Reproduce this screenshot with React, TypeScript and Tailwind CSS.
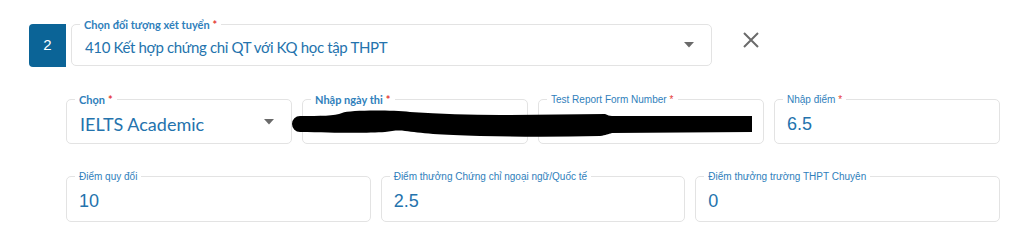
import React from 'react';

const muli = "font-['Lato','Open_Sans',sans-serif]";
const arial = "font-['Liberation_Sans',Arial,sans-serif]";

interface FieldProps {
  label: string;
  value?: string;
  required?: boolean;
  select?: boolean;
  labelFont?: string;
  valueFont?: string;
  className?: string;
}

const Caret = () => (
  <svg width="10" height="6" viewBox="0 0 10 6" className="ml-auto mr-[17px] shrink-0">
    <path d="M0 0 L10 0 L5 5.5 Z" fill="#6a6a6a" />
  </svg>
);

const Field: React.FC<FieldProps> = ({
  label,
  value,
  required,
  select,
  labelFont = `${arial} text-[10px]`,
  valueFont = `${arial} text-[18px] pl-[12px]`,
  className = '',
}) => {
  return (
    <div className={`relative flex items-center rounded-[5px] border border-[#e3e3e3] bg-white ${className}`}>
      <span className={`absolute -top-[7px] left-[8px] bg-white px-[4px] leading-[13px] text-[#2f80bb] whitespace-nowrap ${labelFont}`}>
        {label}
        {required && <span className="ml-[3px] text-[#e53935]">*</span>}
      </span>
      <span className={`pt-[4px] leading-none text-[#2473ad] whitespace-nowrap ${valueFont}`}>{value}</span>
      {select && <Caret />}
    </div>
  );
};

const muliLabel = `${muli} text-[11px] font-bold`;

export default function App() {
  return (
    <div className="relative h-[246px] w-[1024px] overflow-hidden bg-white pt-[24px]">
      <div className="flex items-start">
        <div className={`ml-[29px] flex h-[43px] w-[37px] items-center justify-center rounded-l-[4px] bg-[#0b6497] text-[15px] text-white ${arial}`}>
          2
        </div>
        <Field
          className="ml-[5px] h-[42px] w-[641px]"
          label="Chọn đối tượng xét tuyển"
          required
          select
          labelFont={muliLabel}
          valueFont={`${muli} text-[15px] tracking-[-0.35px] pl-[13px]`}
          value="410 Kết hợp chứng chỉ QT với KQ học tập THPT"
        />
        <svg width="18" height="18" viewBox="0 0 18 18" className="ml-[30px] mt-[7px]">
          <path d="M2 2 L16 16 M16 2 L2 16" stroke="#6b6b6b" strokeWidth="2" />
        </svg>
      </div>

      <div className="mt-[32px] grid grid-cols-4 gap-x-[10px] pl-[66px] pr-[24px]">
        <Field className="h-[45px]" label="Chọn" required select labelFont={muliLabel} valueFont={`${muli} text-[18px] pl-[13px]`} value="IELTS Academic" />
        <Field className="h-[45px]" label="Nhập ngày thi" required labelFont={muliLabel} />
        <Field className="h-[45px]" label="Test Report Form Number" required />
        <Field className="h-[45px]" label="Nhập điểm" required value="6.5" />
      </div>

      <div className="mt-[32px] grid grid-cols-3 gap-x-[10px] pl-[66px] pr-[24px]">
        <Field className="h-[46px]" label="Điểm quy đổi" value="10" />
        <Field className="h-[46px]" label="Điểm thưởng Chứng chỉ ngoại ngữ/Quốc tế" value="2.5" />
        <Field className="h-[46px]" label="Điểm thưởng trường THPT Chuyên" value="0" />
      </div>

      {/* redaction scribble drawn over the date / report number fields */}
      <svg className="pointer-events-none absolute left-0 top-0" width="1024" height="246" viewBox="0 0 1024 246">
        <path
          d="M300 116 C320 116 335 116 342 113 C350 110 390 110 410 112 C440 114 470 115 500 115 L605 114 C608 115 609 116 612 116 L752 116 L752 132 L612 133 C608 134 606 135 600 136 C560 137 520 137 480 136 C440 135 420 133 405 131 C398 130 392 131 385 132 C370 133 340 133 300 132 A8 8 0 0 1 300 116 Z"
          fill="#000"
        />
      </svg>
    </div>
  );
}
